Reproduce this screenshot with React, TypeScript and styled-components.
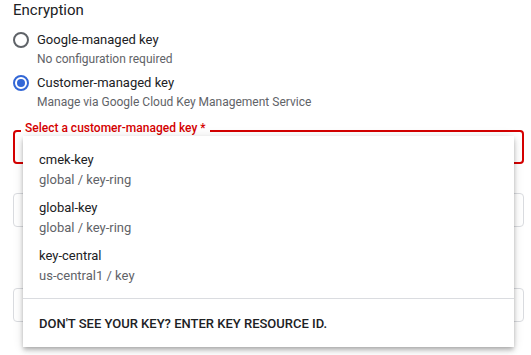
import React, { FC } from "react"
import styled, { createGlobalStyle } from "styled-components"

const GlobalStyle = createGlobalStyle`
    html, body {
        margin: 0;
        padding: 0;
        background: #ffffff;
        font-family: Roboto, "Liberation Sans", Arial, sans-serif;
        color: #202124;
    }
`

const Page = styled.div`
    position: relative;
    width: 531px;
    height: 355px;
    box-sizing: border-box;
    padding: 0 7px 0 13px;
    overflow: hidden;
`

const Title = styled.div`
    font-size: 15px;
    line-height: 20px;
    color: #202124;
`

const RadioGroup = styled.div`
    display: flex;
    flex-direction: column;
    gap: 6px;
    margin-top: 10px;
`

const Option = styled.label`
    display: grid;
    grid-template-columns: 16px 1fr;
    column-gap: 8px;
    cursor: pointer;
`

const RadioCircle = styled.span<{ $checked?: boolean }>`
    box-sizing: border-box;
    width: 16px;
    height: 16px;
    margin-top: 2px;
    border-radius: 50%;
    border: 2px solid ${(p) => (p.$checked ? "#3367d6" : "#5f6368")};
    display: flex;
    align-items: center;
    justify-content: center;
    &::after {
        content: "";
        width: 8px;
        height: 8px;
        border-radius: 50%;
        background: ${(p) => (p.$checked ? "#3367d6" : "transparent")};
    }
`

const OptionLabel = styled.div`
    font-size: 13px;
    line-height: 20px;
    color: #202124;
`

const OptionHint = styled.div`
    grid-column: 2;
    font-size: 12px;
    line-height: 16px;
    margin-top: 1px;
    color: #5f6368;
`

const Fields = styled.div`
    position: relative;
    margin-top: 20px;
`

const Field = styled.div<{ $error?: boolean; $gap?: number }>`
    position: relative;
    box-sizing: border-box;
    height: 34px;
    margin-top: ${(p) => p.$gap ?? 0}px;
    border-radius: 4px;
    border: ${(p) => (p.$error ? "2px solid #d50000" : "1px solid #dadce0")};
`

const FieldLabel = styled.span`
    position: absolute;
    left: 6px;
    top: -12px;
    padding: 0 4px;
    background: #ffffff;
    font-size: 12px;
    line-height: 16px;
    font-weight: 500;
    color: #d50000;
`

const Menu = styled.div`
    position: absolute;
    left: 10px;
    top: 6px;
    width: 491px;
    background: #ffffff;
    padding-top: 10px;
    box-shadow: 0 2px 4px -1px rgba(0, 0, 0, 0.2), 0 4px 5px 0 rgba(0, 0, 0, 0.14), 0 1px 10px 0 rgba(0, 0, 0, 0.12);
`

const MenuItem = styled.div`
    padding: 4px 16px;
    height: 40px;
    display: flex;
    flex-direction: column;
`

const ItemName = styled.div`
    font-size: 13px;
    line-height: 20px;
    color: #202124;
`

const ItemPath = styled.div`
    font-size: 13px;
    line-height: 19px;
    color: #5f6368;
`

const Divider = styled.div`
    height: 1px;
    margin-top: 8px;
    background: #dadce0;
`

const Footer = styled.div`
    height: 48px;
    display: flex;
    align-items: center;
    padding: 0 16px;
    font-size: 13px;
    font-weight: 500;
    text-transform: uppercase;
    color: #202124;
`

const keys = [
    { name: "cmek-key", path: "global / key-ring" },
    { name: "global-key", path: "global / key-ring" },
    { name: "key-central", path: "us-central1 / key" },
]

const App: FC = () => (
    <Page>
        <GlobalStyle />
        <Title>Encryption</Title>
        <RadioGroup>
            <Option>
                <RadioCircle />
                <OptionLabel>Google-managed key</OptionLabel>
                <OptionHint>No configuration required</OptionHint>
            </Option>
            <Option>
                <RadioCircle $checked />
                <OptionLabel>Customer-managed key</OptionLabel>
                <OptionHint>Manage via Google Cloud Key Management Service</OptionHint>
            </Option>
        </RadioGroup>
        <Fields>
            <Field $error>
                <FieldLabel>Select a customer-managed key *</FieldLabel>
            </Field>
            <Field $gap={29} />
            <Field $gap={61} />
            <Menu>
                {keys.map((k) => (
                    <MenuItem key={k.name}>
                        <ItemName>{k.name}</ItemName>
                        <ItemPath>{k.path}</ItemPath>
                    </MenuItem>
                ))}
                <Divider />
                <Footer>Don't see your key? Enter key resource ID.</Footer>
            </Menu>
        </Fields>
    </Page>
)

export default App
